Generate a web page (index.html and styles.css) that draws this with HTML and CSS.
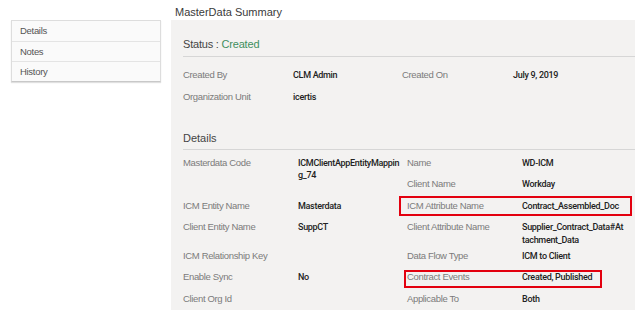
FILE: index.html
```html
<!DOCTYPE html>
<html lang="en">
<head>
  <meta charset="UTF-8" />
  <meta name="viewport" content="width=device-width, initial-scale=1.0"/>
  <title>MasterData Summary</title>
  <link rel="stylesheet" href="styles.css">
</head>
<body>
  <div class="page">
    <ul class="side-nav">
      <li>Details</li>
      <li>Notes</li>
      <li>History</li>
    </ul>

    <div class="summary">
      <div class="summary-title">MasterData Summary</div>

      <div class="panel">
        <h3 class="section-head">Status : <span class="status-created">Created</span></h3>

        <div class="info-grid info-top">
          <div class="lbl">Created By</div>
          <div class="val">CLM Admin</div>
          <div class="lbl">Created On</div>
          <div class="val">July 9, 2019</div>
          <div class="lbl">Organization Unit</div>
          <div class="val">icertis</div>
        </div>

        <h3 class="section-head details-head">Details</h3>

        <div class="info-grid info-details">
          <div class="lbl tall">Masterdata Code</div>
          <div class="val tall">ICMClientAppEntityMapping_74</div>
          <div class="lbl">Name</div>
          <div class="val">WD-ICM</div>
          <div class="lbl">Client Name</div>
          <div class="val">Workday</div>

          <div class="lbl">ICM Entity Name</div>
          <div class="val">Masterdata</div>
          <div class="lbl">ICM Attribute Name</div>
          <div class="val">Contract_Assembled_Doc</div>

          <div class="lbl">Client Entity Name</div>
          <div class="val">SuppCT</div>
          <div class="lbl">Client Attribute Name</div>
          <div class="val val-narrow">Supplier_Contract_Data#Attachment_Data</div>

          <div class="lbl">ICM Relationship Key</div>
          <div class="val"></div>
          <div class="lbl">Data Flow Type</div>
          <div class="val">ICM to Client</div>

          <div class="lbl">Enable Sync</div>
          <div class="val">No</div>
          <div class="lbl">Contract Events</div>
          <div class="val">Created, Published</div>

          <div class="lbl">Client Org Id</div>
          <div class="val"></div>
          <div class="lbl">Applicable To</div>
          <div class="val">Both</div>
        </div>

        <!-- highlight boxes drawn over the screenshot -->
        <div class="mark mark-attr"></div>
        <div class="mark mark-events"></div>
      </div>
    </div>
  </div>
</body>
</html>
```

FILE: styles.css
```css
body {
  margin: 0;
  background-color: #ffffff;
  font-family: 'Liberation Sans', Arial, sans-serif;
  color: #444;
}

.page {
  display: flex;
  align-items: flex-start;
  padding-left: 11px;
}

.side-nav {
  box-sizing: border-box;
  list-style: none;
  margin: 20px 0 0;
  padding: 0;
  width: 150px;
  background-color: #fafafa;
  border: 1px solid #dddddd;
  border-bottom-color: #c8c8c8;
  box-shadow: 0 1px 1px rgba(0, 0, 0, 0.12);
}

.side-nav li {
  height: 19px;
  line-height: 19px;
  padding-left: 8px;
  font-size: 9.5px;
  letter-spacing: -0.3px;
  color: #555;
  border-bottom: 1px solid #e4e4e4;
}

.side-nav li:first-child {
  height: 20px;
  line-height: 20px;
}

.side-nav li:last-child {
  border-bottom: none;
}

.summary {
  margin-left: 10px;
  width: 464px;
}

.summary-title {
  padding: 5px 0 1px 4px;
  line-height: 14px;
  font-size: 11px;
  color: #3a3a3a;
}

.panel {
  position: relative;
  height: 290px;
  padding-left: 12px;
  background-color: #f3f2f1;
}

.section-head {
  margin: 0;
  padding: 16px 0 4px;
  line-height: 16px;
  font-size: 11px;
  font-weight: normal;
  letter-spacing: -0.2px;
  color: #444;
  border-bottom: 1px solid #d6d6d6;
}

.status-created {
  color: #3f8f5e;
}

.details-head {
  padding-top: 21px;
  padding-bottom: 3px;
  letter-spacing: 0;
}

.info-grid {
  display: grid;
  grid-auto-rows: minmax(21.5px, auto);
}

.info-top {
  margin-top: 8.5px;
  grid-template-columns: 110px 109px 111px auto;
}

.info-details {
  margin-top: 3.5px;
  grid-template-columns: 115px 109px 115px auto;
}

.lbl,
.val {
  padding-top: 3.5px;
  line-height: 12.5px;
}

.lbl {
  font-size: 9.5px;
  letter-spacing: -0.35px;
  color: #7b7b7b;
}

.val {
  padding-right: 4px;
  font-family: Roboto, 'Liberation Sans', sans-serif;
  font-size: 9px;
  font-weight: 500;
  letter-spacing: -0.3px;
  color: #222;
  word-break: break-all;
}

.val-narrow {
  padding-right: 11px;
}

.tall {
  grid-row: span 2;
}

.mark {
  position: absolute;
  border: 2px solid #e3000f;
}

.mark-attr {
  left: 228px;
  top: 176px;
  width: 229px;
  height: 16px;
}

.mark-events {
  left: 233px;
  top: 250px;
  width: 194px;
  height: 14px;
}
```
